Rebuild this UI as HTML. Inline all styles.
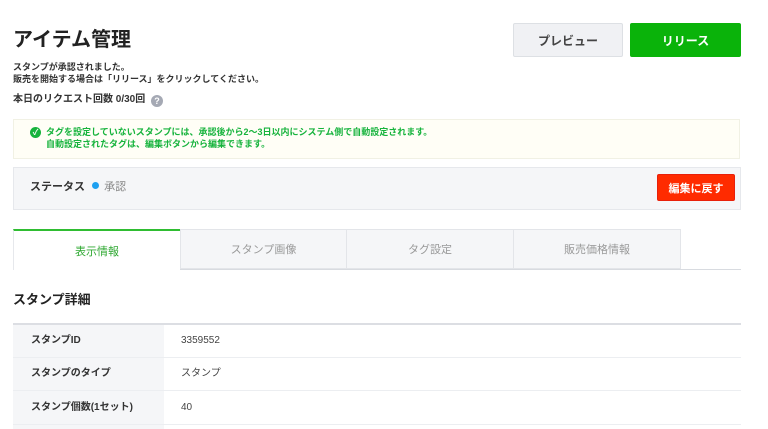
<!DOCTYPE html>
<html><head><meta charset="utf-8"><style>
*{margin:0;padding:0;box-sizing:border-box}
body{width:768px;height:429px;overflow:hidden;background:#fff;font-family:"Liberation Sans","Noto Sans CJK JP",sans-serif;color:#222;position:relative}
.a{position:absolute;white-space:nowrap}
.btn{position:absolute;display:flex;align-items:center;justify-content:center;font-weight:bold;font-size:12px;border-radius:2px}
.t{line-height:14px;font-size:10px}
</style></head><body>
<div class="a" style="left:13px;top:27px;font-size:20px;font-weight:bold;line-height:26px">アイテム管理</div>
<div class="btn" style="left:513px;top:23px;width:110px;height:34px;background:#f0f1f4;border:1px solid #dde0e4;color:#444">プレビュー</div>
<div class="btn" style="left:630px;top:23px;width:111px;height:34px;background:#0ab30a;color:#fff">リリース</div>
<div class="a" style="left:13px;top:61px;font-size:9px;line-height:12px;font-weight:bold;color:#333">スタンプが承認されました。<br>販売を開始する場合は「リリース」をクリックしてください。</div>
<div class="a" style="left:13px;top:93px;font-size:10px;line-height:14px;font-weight:bold;color:#333">本日のリクエスト回数 0/30回 <span style="display:inline-block;width:12px;height:12px;border-radius:50%;background:#a5a9b4;color:#fff;font-size:9px;text-align:center;line-height:12px;vertical-align:-2px;margin-left:3px">?</span></div>
<div class="a" style="left:13px;top:119px;width:727px;height:40px;background:#fffef6;border:1px solid #f1f1e4"></div>
<div class="a" style="left:30px;top:127px;width:11px;height:11px;border-radius:50%;background:#16b33c;color:#fff;font-size:8px;line-height:11px;text-align:center;font-weight:bold">✓</div>
<div class="a" style="left:46px;top:126px;font-size:9px;line-height:12px;font-weight:bold;color:#16b33c">タグを設定していないスタンプには、承認後から2〜3日以内にシステム側で自動設定されます。<br>自動設定されたタグは、編集ボタンから編集できます。</div>
<div class="a" style="left:13px;top:167px;width:728px;height:43px;background:#f5f6f8;border:1px solid #e6e8ec"></div>
<div class="a" style="left:30px;top:180px;font-size:11px;line-height:14px;font-weight:bold;color:#333">ステータス <span style="display:inline-block;width:7px;height:7px;border-radius:50%;background:#1ea0f0;margin:0 2px 1px 4px"></span> <span style="font-weight:normal;color:#888">承認</span></div>
<div class="btn" style="left:657px;top:174px;width:78px;height:27px;background:#ff2b00;color:#fff;font-size:11px;border:1px solid #e8200a">編集に戻す</div>
<div class="a" style="left:180px;top:269px;width:561px;height:1px;background:#d8dbe0"></div>
<div class="a" style="left:13px;top:229px;width:167px;height:41px;background:#fff;border-top:2px solid #2fbd32;border-left:1px solid #e6e8ec;display:flex;align-items:center;justify-content:center;font-size:11px;color:#2fa832">表示情報</div>
<div class="a" style="left:180px;top:229px;width:167px;height:40px;background:#f5f6f8;border:1px solid #e3e5e9;display:flex;align-items:center;justify-content:center;font-size:11px;color:#999">スタンプ画像</div>
<div class="a" style="left:347px;top:229px;width:167px;height:40px;background:#f5f6f8;border:1px solid #e3e5e9;border-left:none;display:flex;align-items:center;justify-content:center;font-size:11px;color:#999">タグ設定</div>
<div class="a" style="left:514px;top:229px;width:167px;height:40px;background:#f5f6f8;border:1px solid #e3e5e9;border-left:none;display:flex;align-items:center;justify-content:center;font-size:11px;color:#999">販売価格情報</div>
<div class="a" style="left:13px;top:291px;font-size:13px;font-weight:bold;line-height:18px">スタンプ詳細</div>
<div class="a" style="left:13px;top:323px;width:728px;height:2px;background:#dcdee3"></div>
<div class="a" style="left:13px;top:325px;width:151px;height:104px;background:#f5f6f8"></div>
<div class="a" style="left:13px;top:357px;width:728px;height:1px;background:#eceef1"></div>
<div class="a" style="left:13px;top:390px;width:728px;height:1px;background:#eceef1"></div>
<div class="a" style="left:13px;top:424px;width:728px;height:1px;background:#eceef1"></div>
<div class="a t" style="left:31px;top:334px;font-weight:bold;color:#333">スタンプID</div>
<div class="a t" style="left:181px;top:334px;color:#444">3359552</div>
<div class="a t" style="left:31px;top:367px;font-weight:bold;color:#333">スタンプのタイプ</div>
<div class="a t" style="left:181px;top:367px;color:#444">スタンプ</div>
<div class="a t" style="left:31px;top:401px;font-weight:bold;color:#333">スタンプ個数(1セット)</div>
<div class="a t" style="left:181px;top:401px;color:#444">40</div>
</body></html>
